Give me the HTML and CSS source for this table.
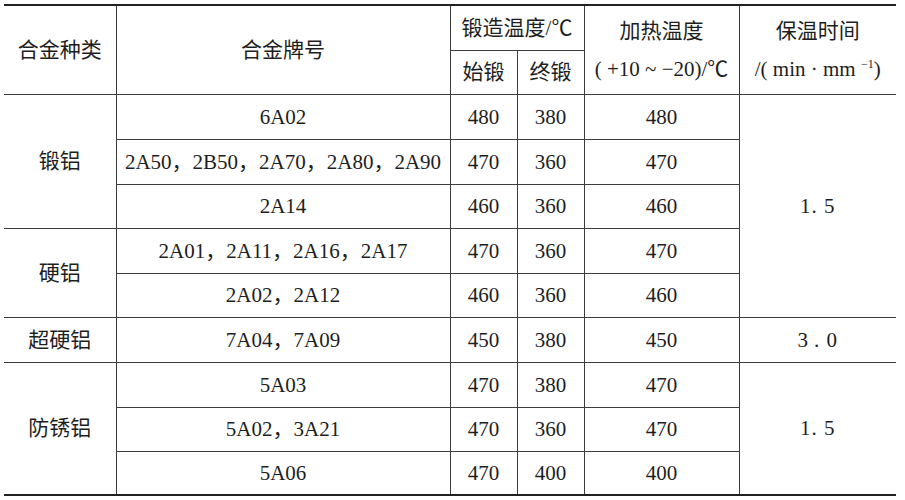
FILE: index.html
```html
<!DOCTYPE html>
<html lang="zh">
<head>
<meta charset="utf-8">
<link rel="stylesheet" href="styles.css">
</head>
<body>
<table class="spec">
  <colgroup>
    <col class="c-kind"><col class="c-grade"><col class="c-t"><col class="c-t"><col class="c-heat"><col class="c-hold">
  </colgroup>
  <thead>
    <tr class="h1">
      <th rowspan="2">合金种类</th>
      <th rowspan="2">合金牌号</th>
      <th colspan="2">锻造温度/℃</th>
      <th rowspan="2" class="two"><span class="l1">加热温度</span><span class="l2">(&nbsp;+10&nbsp;~&nbsp;−20)/℃</span></th>
      <th rowspan="2" class="two end"><span class="l1">保温时间</span><span class="l2">/(&nbsp;min&nbsp;·&nbsp;mm&nbsp;<sup>−1</sup>)</span></th>
    </tr>
    <tr class="h2">
      <th>始锻</th>
      <th>终锻</th>
    </tr>
  </thead>
  <tbody>
    <tr class="r45"><td rowspan="3">锻铝</td><td>6A02</td><td>480</td><td>380</td><td>480</td><td rowspan="5" class="end sp">1.&nbsp;5</td></tr>
    <tr class="r45"><td>2A50，2B50，2A70，2A80，2A90</td><td>470</td><td>360</td><td>470</td></tr>
    <tr class="r44"><td>2A14</td><td>460</td><td>360</td><td>460</td></tr>
    <tr class="r45"><td rowspan="2">硬铝</td><td>2A01，2A11，2A16，2A17</td><td>470</td><td>360</td><td>470</td></tr>
    <tr class="r44"><td>2A02，2A12</td><td>460</td><td>360</td><td>460</td></tr>
    <tr class="r45"><td>超硬铝</td><td>7A04，7A09</td><td>450</td><td>380</td><td>450</td><td class="end sp">3&thinsp;.&nbsp;0</td></tr>
    <tr class="r45"><td rowspan="3">防锈铝</td><td>5A03</td><td>470</td><td>380</td><td>470</td><td rowspan="3" class="end sp">1.&nbsp;5</td></tr>
    <tr class="r44"><td>5A02，3A21</td><td>470</td><td>360</td><td>470</td></tr>
    <tr class="r44"><td>5A06</td><td>470</td><td>400</td><td>400</td></tr>
  </tbody>
</table>
</body>
</html>
```

FILE: styles.css
```css
html, body {
  margin: 0;
  padding: 0;
  background: #ffffff;
}

body {
  padding: 4px 0 0 4px;
  font-family: "Liberation Serif", "Noto Sans CJK SC", serif;
  color: #1e1e1e;
  font-size: 21px;
}

.spec {
  border-collapse: collapse;
  table-layout: fixed;
  width: 892px;
  border-top: 2px solid #222;
  border-bottom: 2px solid #222;
  border-left: hidden;
  border-right: hidden;
}

.c-kind { width: 112px; }
.c-grade { width: 334px; }
.c-t { width: 67px; }
.c-heat { width: 155px; }
.c-hold { width: 157px; }

.spec th,
.spec td {
  border-top: 1px solid #3c3c3c;
  border-bottom: 1px solid #3c3c3c;
  border-left: none;
  border-right: 1px solid #3c3c3c;
  padding: 0;
  text-align: center;
  vertical-align: middle;
  font-weight: normal;
  white-space: nowrap;
  line-height: 24px;
}

.spec .end { border-right: hidden; }

.h1 { height: 45px; }
.h2 { height: 44px; }
.r45 { height: 45px; }
.r44 { height: 44px; }

.two .l1,
.two .l2 {
  display: block;
}
.two .l1 { margin-bottom: 14px; }
.two .l2 { font-size: 21px; }

sup {
  font-size: 12px;
  line-height: 0;
  vertical-align: 8px;
}

.sp { letter-spacing: 1px; }
```
